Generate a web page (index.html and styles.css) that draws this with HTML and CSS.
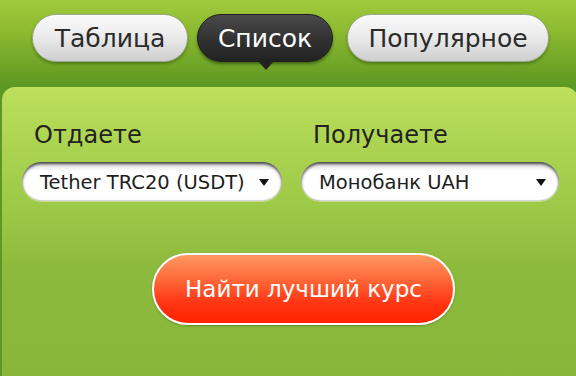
FILE: index.html
```html
<!DOCTYPE html>
<html lang="ru">
<head>
<meta charset="utf-8">
<link rel="stylesheet" href="styles.css">
</head>
<body>
<div class="page">
  <nav class="tabs">
    <a class="tab tab-table">Таблица</a>
    <a class="tab tab-list active">Список</a>
    <a class="tab tab-popular">Популярное</a>
  </nav>
  <section class="panel">
    <div class="fields">
      <div class="field field-give">
        <div class="label">Отдаете</div>
        <div class="select">
          <span class="select-text">Tether TRC20 (USDT)</span>
          <span class="arrow"></span>
        </div>
      </div>
      <div class="field field-get">
        <div class="label">Получаете</div>
        <div class="select">
          <span class="select-text">Монобанк UAH</span>
          <span class="arrow"></span>
        </div>
      </div>
    </div>
    <button class="find">Найти лучший курс</button>
  </section>
</div>
</body>
</html>
```
FILE: styles.css
```css
html, body {
  margin: 0;
  padding: 0;
  width: 576px;
  height: 376px;
  overflow: hidden;
}
body {
  font-family: "DejaVu Sans", Verdana, sans-serif;
  background: linear-gradient(#a2c93c 0px, #8ebb31 30px, #5d9822 86px, #5d9822 100%);
}
.page {
  display: flex;
  flex-direction: column;
}
.tabs {
  display: flex;
  padding: 14px 0 0 32px;
  height: 48px;
}
.tab {
  position: relative;
  display: flex;
  align-items: center;
  justify-content: center;
  height: 48px;
  box-sizing: border-box;
  border-radius: 24px;
  font-size: 25px;
  color: #2b2b2b;
  background: linear-gradient(#fafafa 0%, #ececec 45%, #cfcfcf 100%);
  border: 1px solid #9aa98a;
  box-shadow: 0 2px 3px rgba(40, 70, 0, 0.45), inset 0 1px 0 #fff;
}
.tab-table { width: 156px; }
.tab-list { width: 136px; margin-left: 9px; }
.tab-popular { width: 202px; margin-left: 14px; }
.tab.active {
  color: #fff;
  background: linear-gradient(#4a4a4a 0%, #333 50%, #222 100%);
  border-color: #1e1e1e;
  box-shadow: 0 2px 3px rgba(20, 40, 0, 0.5);
}
.tab.active::after {
  content: "";
  position: absolute;
  left: 60px;
  bottom: -9px;
  border-left: 8px solid transparent;
  border-right: 8px solid transparent;
  border-top: 9px solid #222;
}
.panel {
  margin: 25px 0 0 2px;
  width: 576px;
  height: 300px;
  border-radius: 13px;
  background: linear-gradient(#bde05d 0px, #b1d754 40px, #9cc947 120px, #8cba3c 180px, #88b63a 100%);
  display: flex;
  flex-direction: column;
  padding-top: 34px;
  box-sizing: border-box;
}
.fields {
  display: flex;
  padding-left: 20px;
  gap: 19px;
}
.field {
  display: flex;
  flex-direction: column;
  width: 260px;
}
.field-get { width: 258px; }
.label {
  font-size: 24px;
  color: #222;
  padding-left: 12px;
  line-height: 28px;
  height: 41px;
}
.select {
  height: 39px;
  box-sizing: border-box;
  border-radius: 20px;
  background: linear-gradient(#d8d8d8 0px, #fff 9px, #fff 100%);
  box-shadow: inset 0 2px 3px rgba(0, 0, 0, 0.7), inset 0 -1px 1px rgba(0, 0, 0, 0.15), 0 1px 0 rgba(255, 255, 255, 0.4);
  display: flex;
  align-items: center;
  padding: 2px 13px 0 18px;
  justify-content: space-between;
}
.select-text {
  font-size: 19.5px;
  color: #1e1e1e;
  white-space: nowrap;
}
.arrow {
  width: 0;
  height: 0;
  border-left: 5.5px solid transparent;
  border-right: 5.5px solid transparent;
  border-top: 7px solid #111;
  flex: none;
}
.find {
  align-self: flex-start;
  margin: 52px 0 0 150px;
  width: 303px;
  height: 72px;
  border-radius: 36px;
  border: 2px solid #fff;
  background: linear-gradient(#ff9860 0%, #ff6a3a 35%, #ff3614 70%, #ff2200 100%);
  color: #fff;
  font-family: "DejaVu Sans", Verdana, sans-serif;
  font-size: 23px;
  padding: 0;
  box-shadow: 0 1px 2px rgba(60, 80, 0, 0.4);
}
```
